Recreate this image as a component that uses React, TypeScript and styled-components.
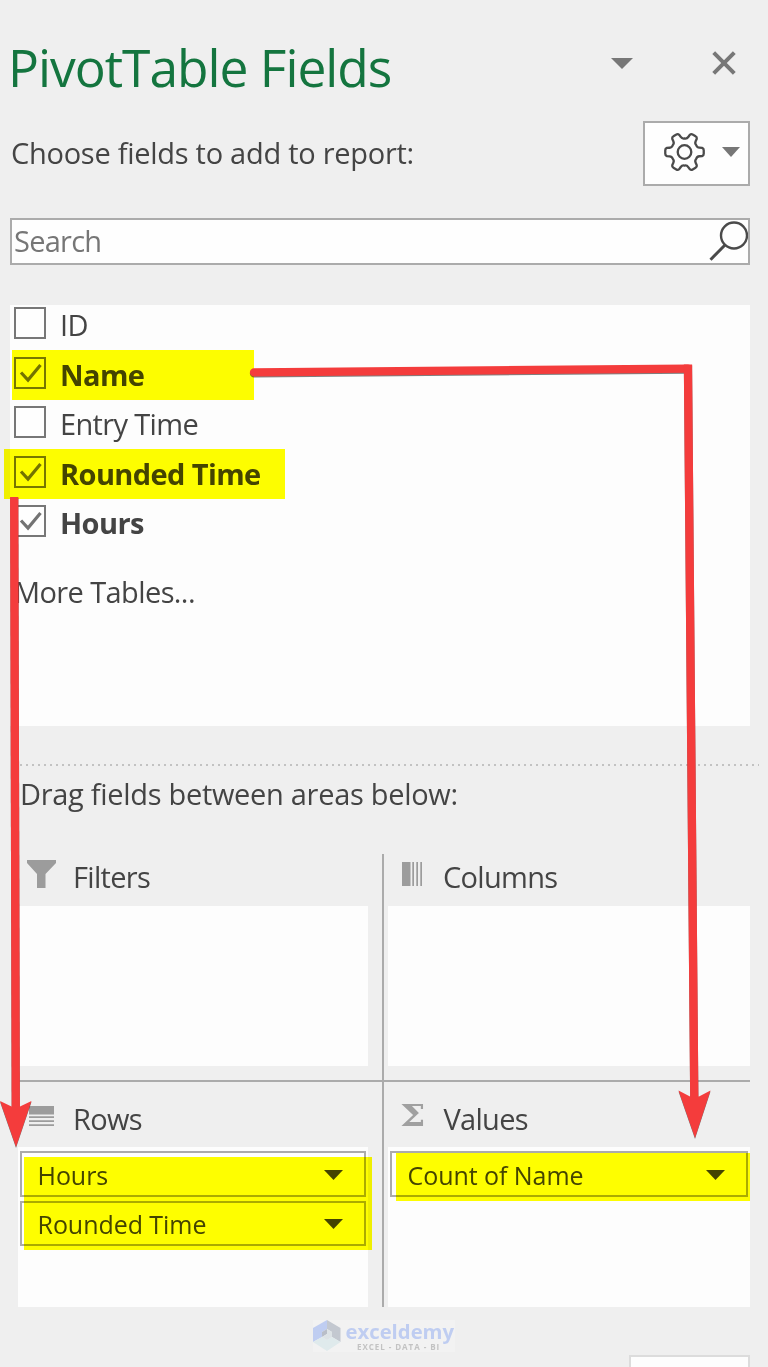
import React from 'react';
import styled, { createGlobalStyle } from 'styled-components';

const GlobalStyle = createGlobalStyle`
  *, *::before, *::after { box-sizing: border-box; }
  body { margin: 0; background: #efefef; }
`;

const Panel = styled.main`
  position: relative;
  display: flex;
  flex-direction: column;
  width: 768px;
  height: 1367px;
  overflow: hidden;
  background: #efefef;
  color: #444;
  font-family: 'Open Sans', 'Noto Sans', sans-serif;
  font-size: 29px;
  font-weight: 400;
  line-height: 40px;
  white-space: nowrap;

  > * { flex-shrink: 0; }
`;

const Header = styled.header`
  display: flex;
  align-items: center;
  height: 120px;
  padding: 0 32px 0 8px;
`;

const Title = styled.h1`
  flex: 1;
  margin: 13px 0 0;
  font-size: 51.5px;
  font-weight: 390;
  line-height: 66px;
  letter-spacing: -1px;
  color: #14753f;
`;

const HeaderActions = styled.div`
  display: flex;
  gap: 79px;
  align-items: center;
  margin-top: 6px;
`;

const Icon = styled.svg`
  display: block;
  flex: none;
`;

const Prompt = styled.div`
  display: flex;
  justify-content: space-between;
  height: 98px;
  padding: 1px 18px 0 11px;
`;

const PromptText = styled.span`
  margin-top: 12px;
  letter-spacing: -0.27px;
`;

const ToolsButton = styled.button`
  display: flex;
  align-items: center;
  gap: 17px;
  width: 107px;
  height: 65px;
  padding: 0 0 3px 19px;
  border: 2px solid #ababab;
  background: #fefefe;
`;

const SearchBox = styled.div`
  display: flex;
  justify-content: space-between;
  height: 47px;
  margin: 0 18px 0 10px;
  padding-left: 2px;
  border: 2px solid #ababab;
  background: #fefefe;
  color: #767676;
  line-height: 41px;
  letter-spacing: -0.75px;
`;

const FieldList = styled.ul`
  display: flex;
  flex-direction: column;
  gap: 9.5px;
  height: 421px;
  margin: 40px 18px 0 10px;
  padding: 0 0 0 4px;
  background: #fdfdfd;
  list-style: none;
`;

const FieldRow = styled.li<{ $checked: boolean }>`
  display: flex;
  align-items: center;
  gap: 14px;
  height: 40px;
  font-weight: ${(p) => (p.$checked ? 700 : 400)};
  letter-spacing: ${(p) => (p.$checked ? '-0.6px' : '-0.65px')};
`;

const Checkbox = styled.span`
  display: flex;
  align-items: center;
  justify-content: center;
  width: 32px;
  height: 32px;
  margin-bottom: 4px;
  border: 2px solid #777;
  background: #fefefe;
`;

const MoreTables = styled.li`
  margin: 19.5px 0 0 0;
  letter-spacing: -0.6px;
`;

const Divider = styled.div`
  height: 2px;
  margin: 38px 9px 0 20px;
  background: repeating-linear-gradient(90deg, #c2c2c2 0 2px, transparent 2px 6px);
`;

const AreasText = styled.p`
  margin: 8px 0 0 20px;
  height: 80px;
  letter-spacing: -0.3px;
`;

const Areas = styled.section`
  display: grid;
  grid-template-columns: 364px 2px 366px;
  grid-template-rows: 226px 2px 225px;
  margin-left: 18px;
`;

const Rule = styled.div<{ $vertical?: boolean }>`
  background: #ababab;
  ${(p) => (p.$vertical ? 'grid-area: 1 / 2 / 4 / 3;' : 'grid-area: 2 / 1 / 3 / 4;')}
`;

const Area = styled.div<{ $column: number; $row: number }>`
  grid-column: ${(p) => p.$column};
  grid-row: ${(p) => p.$row};
  display: flex;
  flex-direction: column;
  width: ${(p) => (p.$column === 1 ? 350 : 362)}px;
  margin-left: ${(p) => (p.$column === 1 ? 0 : 4)}px;
`;

const AreaTitle = styled.div<{ $lower?: boolean }>`
  display: flex;
  align-items: flex-start;
  height: ${(p) => (p.$lower ? 65 : 52)}px;
  padding-top: ${(p) => (p.$lower ? 17 : 3)}px;
  letter-spacing: -0.7px;
`;

const IconSlot = styled.span<{ $width: number; $inset: number }>`
  display: flex;
  align-items: center;
  width: ${(p) => p.$width}px;
  height: 34px;
  padding-left: ${(p) => p.$inset}px;
`;

const Sigma = styled.span`
  color: #a0a0a0;
  font-family: 'DejaVu Serif', serif;
  font-size: 30px;
  font-weight: 700;
  line-height: 34px;
  transform: scaleX(1.2);
  transform-origin: left;
`;

const DropZone = styled.div`
  display: flex;
  flex-direction: column;
  gap: 4px;
  height: 160px;
  padding: 4px 2px;
  background: #fdfdfd;
`;

const Chip = styled.div`
  display: flex;
  align-items: center;
  justify-content: space-between;
  height: 45.5px;
  padding: 2px 21px 0 15.5px;
  border: 2px solid #ababab;
  background: #fefefe;
  font-size: 25px;
  letter-spacing: -0.05px;
`;

const Highlight = styled.i<{ $x: number; $y: number; $w: number; $h: number }>`
  position: absolute;
  left: ${(p) => p.$x}px;
  top: ${(p) => p.$y}px;
  width: ${(p) => p.$w}px;
  height: ${(p) => p.$h}px;
  background: #ff0;
  mix-blend-mode: multiply;
`;

const Arrows = styled.svg`
  position: absolute;
  inset: 0;
  filter: drop-shadow(0.5px 1.5px 0.7px rgba(0, 0, 0, 0.5));
`;

const Footer = styled.footer`
  display: flex;
  justify-content: space-between;
  align-items: flex-start;
  padding: 12.5px 18px 0 313px;
`;

const Brand = styled.div`
  display: flex;
  gap: 4.5px;
  width: 142px;
  height: 32px;
  background: #f2f2f2;
`;

const BrandName = styled.div`
  display: flex;
  flex-direction: column;
  color: #bfcdf1;
  font-size: 20.3px;
  font-weight: 700;
  line-height: 22px;
`;

const Tagline = styled.small`
  margin: 0.5px 0 0 11.5px;
  color: #c3c3c3;
  font-size: 8px;
  font-weight: 700;
  line-height: 9px;
  letter-spacing: 0.95px;
`;

const UpdateButton = styled.div`
  width: 121px;
  height: 30px;
  margin-top: 35px;
  border: 2px solid #dcdcdc;
  background: #fdfdfd;
`;

const Caret = ({ width, height, color }: { width: number; height: number; color: string }) => (
  <Icon width={width} height={height} viewBox="0 0 22 11" preserveAspectRatio="none">
    <path d="M0 0H22L11 11Z" fill={color} />
  </Icon>
);

const polar = (deg: number, r: number) => {
  const a = (deg * Math.PI) / 180;
  return `${(r * Math.cos(a)).toFixed(2)} ${(r * Math.sin(a)).toFixed(2)}`;
};

const gearPath =
  `M${polar(-30, 13.6)}` +
  [0, 60, 120, 180, 240, 300]
    .map(
      (d) =>
        `Q${polar(d - 20, 13.2)} ${polar(d - 16, 15.5)}L${polar(d - 13, 18)}Q${polar(d - 10, 19.6)} ${polar(d - 5, 19.3)}` +
        `L${polar(d + 5, 19.3)}Q${polar(d + 10, 19.6)} ${polar(d + 13, 18)}L${polar(d + 16, 15.5)}Q${polar(d + 20, 13.2)} ${polar(d + 30, 13.6)}`,
    )
    .join('') +
  'Z';

const Gear = () => (
  <Icon width="41" height="42" viewBox="-20.5 -21 41 42" fill="none" stroke="#4a4a4a" strokeWidth="2.3" strokeLinejoin="round">
    <path d={gearPath} />
    <circle r="6.8" />
  </Icon>
);

const Check = () => (
  <Icon width="24" height="22" viewBox="0 0 24 22">
    <path d="M3 10.5L10 18L22.5 3" fill="none" stroke="#737373" strokeWidth="3.2" />
  </Icon>
);

const fields = [
  { name: 'ID', checked: false },
  { name: 'Name', checked: true },
  { name: 'Entry Time', checked: false },
  { name: 'Rounded Time', checked: true },
  { name: 'Hours', checked: true },
];

const FieldChip = ({ name }: { name: string }) => (
  <Chip>
    {name}
    <Caret width={19} height={10} color="#444" />
  </Chip>
);

export default function App() {
  return (
    <Panel>
      <GlobalStyle />
      <Header>
        <Title>PivotTable Fields</Title>
        <HeaderActions>
          <Caret width={22} height={11} color="#777" />
          <Icon width="24" height="24" viewBox="0 0 24 24">
            <path d="M1.7 1.7L22.3 22.3M22.3 1.7L1.7 22.3" stroke="#777" strokeWidth="4" />
          </Icon>
        </HeaderActions>
      </Header>
      <Prompt>
        <PromptText>Choose fields to add to report:</PromptText>
        <ToolsButton>
          <Gear />
          <Caret width={18} height={10} color="#777" />
        </ToolsButton>
      </Prompt>
      <SearchBox>
        Search
        <Icon width="40" height="43" viewBox="0 0 40 43" fill="none" stroke="#4a4a4a" strokeWidth="2.4">
          <circle cx="26" cy="15.5" r="13" />
          <path d="M17 25L2.5 39.7" strokeWidth="3" />
        </Icon>
      </SearchBox>
      <FieldList>
        {fields.map((f) => (
          <FieldRow key={f.name} $checked={f.checked}>
            <Checkbox>{f.checked && <Check />}</Checkbox>
            {f.name}
          </FieldRow>
        ))}
        <MoreTables>More Tables...</MoreTables>
      </FieldList>
      <Divider />
      <AreasText>Drag fields between areas below:</AreasText>
      <Areas>
        <Rule />
        <Rule $vertical />
        <Area $column={1} $row={1}>
          <AreaTitle>
            <IconSlot $width={55} $inset={9}>
              <Icon width="29" height="28" viewBox="0 0 29 28">
                <path d="M0 0H29V3L18.5 14V28H10V14L0 3Z" fill="#9c9c9c" />
              </Icon>
            </IconSlot>
            Filters
          </AreaTitle>
          <DropZone />
        </Area>
        <Area $column={3} $row={1}>
          <AreaTitle>
            <IconSlot $width={55} $inset={14}>
              <Icon width="21" height="24" viewBox="0 0 21 24" fill="#9c9c9c">
                <path d="M0 0H8.5V24H0ZM10.3 0H12V24H10.3ZM14.3 0H16V24H14.3ZM18.3 0H20V24H18.3Z" />
              </Icon>
            </IconSlot>
            Columns
          </AreaTitle>
          <DropZone />
        </Area>
        <Area $column={1} $row={3}>
          <AreaTitle $lower>
            <IconSlot $width={55} $inset={11}>
              <Icon width="25" height="21" viewBox="0 0 25 21" fill="#9c9c9c">
                <path d="M0 0H25V8.5H0ZM0 10.3H25V12H0ZM0 14.3H25V16H0ZM0 18.3H25V20H0Z" />
              </Icon>
            </IconSlot>
            Rows
          </AreaTitle>
          <DropZone>
            <FieldChip name="Hours" />
            <FieldChip name="Rounded Time" />
          </DropZone>
        </Area>
        <Area $column={3} $row={3}>
          <AreaTitle $lower>
            <IconSlot $width={55.5} $inset={11.5}>
              <Sigma>Σ</Sigma>
            </IconSlot>
            Values
          </AreaTitle>
          <DropZone>
            <FieldChip name="Count of Name" />
          </DropZone>
        </Area>
      </Areas>
      <Footer>
        <Brand>
          <Icon width="28" height="32" viewBox="0 0 28 32">
            <path d="M14 0L0 8V22L9 17V12L14 9Z" fill="#bfcdf1" />
            <path d="M14 0L27.5 8V22L19 17V12L14 9Z" fill="#c3c8d0" />
            <path d="M0 22L9 17L14 20L19 17L27.5 22L14 31Z" fill="#dfeaec" />
            <path d="M14 9L9 12V17L14 14Z" fill="#b9bec8" />
            <path d="M14 9L19 12V17L14 20L9 17L14 14Z" fill="#dde3e6" />
          </Icon>
          <BrandName>
            exceldemy
            <Tagline>EXCEL - DATA - BI</Tagline>
          </BrandName>
        </Brand>
        <UpdateButton />
      </Footer>

      <Highlight $x={12} $y={350} $w={241.5} $h={49.5} />
      <Highlight $x={4} $y={449} $w={281} $h={49.5} />
      <Highlight $x={24} $y={1157} $w={348} $h={93} />
      <Highlight $x={396} $y={1153} $w={354} $h={48} />
      <Arrows width="768" height="1367" viewBox="0 0 768 1367">
        <g fill="none" stroke="#f43c3c" strokeWidth="8.3" strokeLinejoin="round">
          <path d="M254 372.4L687.8 368.6" strokeLinecap="round" />
          <path d="M688 364.6V368.6L694.3 1100" />
          <path d="M14.2 497L15.8 1110" />
        </g>
        <g fill="#f43c3c">
          <path d="M678.5 1090.5L690 1096.5H699L710.5 1090.5L695 1138Z" />
          <path d="M0 1101L11.5 1106.5H20L31.5 1101L16 1147Z" />
        </g>
      </Arrows>
    </Panel>
  );
}
